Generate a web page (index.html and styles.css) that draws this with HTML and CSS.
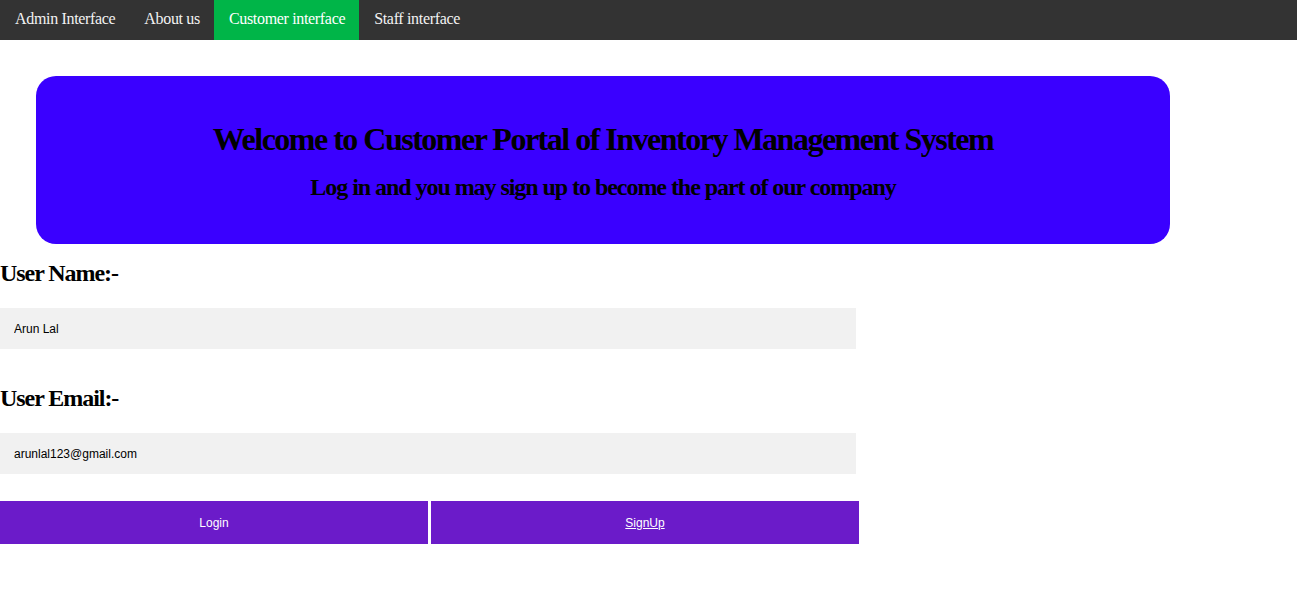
FILE: index.html
```html
<!DOCTYPE html>
<html>
<head>
<meta charset="utf-8">
<link rel="stylesheet" href="styles.css">
</head>
<body>
<nav class="topnav">
  <a href="#">Admin Interface</a>
  <a href="#">About us</a>
  <a href="#" class="active">Customer interface</a>
  <a href="#">Staff interface</a>
</nav>
<header class="banner">
  <h1>Welcome to Customer Portal of Inventory Management System</h1>
  <h2>Log in and you may sign up to become the part of our company</h2>
</header>
<form class="form">
  <h2 class="label">User Name:-</h2>
  <input class="field" type="text" value="Arun Lal">
  <h2 class="label label-2">User Email:-</h2>
  <input class="field" type="text" value="arunlal123@gmail.com">
  <div class="buttons">
    <button type="button" class="btn">Login</button>
    <button type="button" class="btn"><u>SignUp</u></button>
  </div>
</form>
</body>
</html>
```
FILE: styles.css
```css
body {
  margin: 0;
  font-family: "Liberation Serif", "Times New Roman", serif;
  background: #fff;
}
.topnav {
  display: flex;
  height: 40px;
  background: #333333;
}
.topnav a {
  display: block;
  padding: 0 14px 0 15px;
  line-height: 38px;
  color: #f2f2f2;
  text-decoration: none;
  font-size: 16px;
  letter-spacing: -0.33px;
}
.topnav a.active {
  background: #00b548;
  color: #fff;
}
.banner {
  margin: 36px 0 0 36px;
  width: 1134px;
  box-sizing: border-box;
  padding: 24px 0 23px;
  background: #3a00ff;
  border-radius: 20px;
  text-align: center;
}
.banner h1 {
  margin: 21px 0 16px;
  font-size: 32px;
  letter-spacing: -1.5px;
}
.banner h2 {
  margin: 16px 0 20px;
  font-size: 24px;
  letter-spacing: -1.05px;
}
.form {
  margin: 0;
}
.label {
  margin: 15px 0 21px;
  font-size: 24px;
  line-height: 28px;
  letter-spacing: -1.05px;
}
.label-2 {
  margin-top: 35px;
}
.field {
  display: block;
  width: 856px;
  height: 41px;
  box-sizing: border-box;
  margin: 0;
  padding: 0 14px;
  border: none;
  background: #f1f1f1;
  font-family: "Liberation Sans", Arial, sans-serif;
  font-size: 12px;
  color: #000;
  outline: none;
}
.buttons {
  display: flex;
  gap: 3px;
  margin-top: 27px;
}
.btn {
  width: 428px;
  height: 43px;
  border: none;
  background: #6b1bc9;
  color: #fff;
  font-family: "Liberation Sans", Arial, sans-serif;
  font-size: 12px;
  padding: 0;
}
```
